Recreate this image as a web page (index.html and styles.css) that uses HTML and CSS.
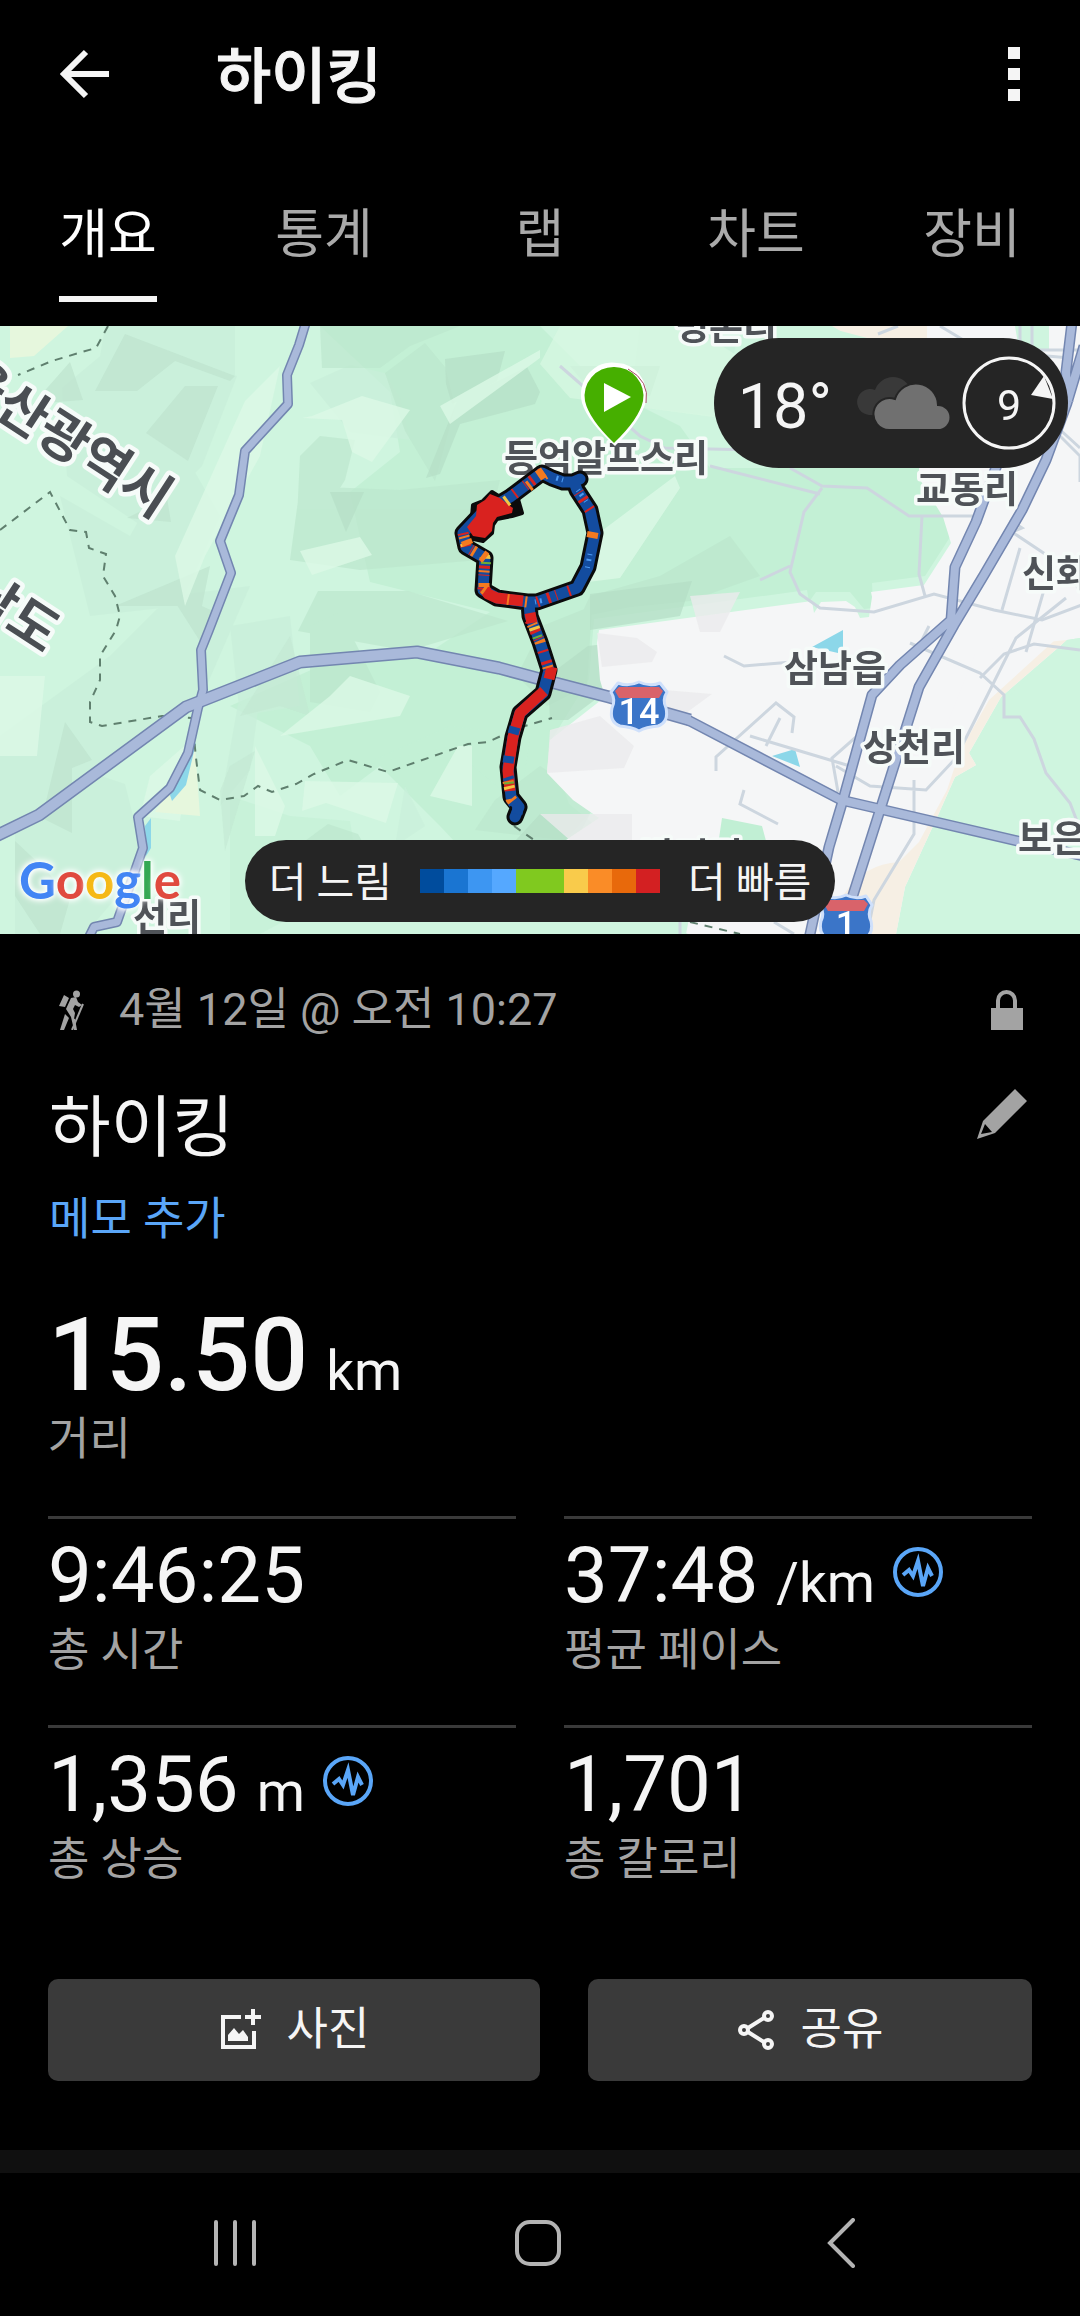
FILE: index.html
```html
<!DOCTYPE html>
<html lang="ko">
<head>
  <meta charset="UTF-8" />
  <meta name="viewport" content="width=device-width, initial-scale=1.0" />
  <title>하이킹</title>
  <link rel="stylesheet" href="styles.css">
</head>
<body>
  <header class="topbar">
    <button class="icon-btn" aria-label="뒤로">
      <svg width="50" height="50" viewBox="0 0 50 50" fill="none" stroke="#f5f5f5" stroke-width="6"><path d="M26 3 4 25l22 22M4 25h45"/></svg>
    </button>
    <h1>하이킹</h1>
    <button class="icon-btn" aria-label="더보기">
      <svg width="12" height="56" viewBox="0 0 12 56" fill="#f5f5f5"><path d="M0 1h12v12H0zM0 22h12v12H0zM0 43h12v12H0z"/></svg>
    </button>
  </header>

  <nav class="tabs">
    <button class="tab active"><span>개요</span></button>
    <button class="tab"><span>통계</span></button>
    <button class="tab"><span>랩</span></button>
    <button class="tab"><span>차트</span></button>
    <button class="tab"><span>장비</span></button>
  </nav>

  <section class="map">
    <svg class="map-canvas" viewBox="0 0 1080 608">
      <rect width="1080" height="608" fill="#cff5df"/>

      <!-- relief -->
      <g fill="#c3f0d5">
        <path d="M320 0h220l60 60 80 40 30 42h210l24 40 8 26-27 42-53 7 1 25-9 1-14-17-34 0-7 10-2-12-213 29-5 60-40 65 20 60 27 22-25 32H470L440 500l-60-60-40 30-30-50-80-40 90-40 110-14 60-40-120-30-20-90 50-40-10-60z"/>
        <path d="M230 470l60 20 60 5 10 60-100 53h-30zM360 440l90-40 80 10-10 70-70-60-90 20z" opacity=".6"/>
      </g>
      <g fill="#c9efda" opacity=".7">
        <path d="M105 0h130v52L150 70l-56-2zM62 62l60-50 115 38-35 90-60 60-75-50zM0 410l110-80 60-60 80-10-50 115L70 470l-70 30zM15 508l50-70 60 20 20 80-60 70H15z"/>
        <path d="M60 170l70 40 50-90 40 70-40 90-90 10zM230 300l60-10 10 90-60 10zM310 57l40-18 35 8 15 25 10 42-60-8z"/>
        <path d="M220 480l30-36 8-60-20-6zM395 520l10-60 20 40zM640 0h100l-20 90-90-10z"/>
      </g>
      <g fill="#bce7cd" opacity=".7">
        <path d="M320 0h140l-50 20-30 22-58 0zM385 47l40-30 20 24 10 40-20 74-30-50zM300 130l20-20 35 4-10 40-50 80zM300 160l100 4 100-10-20 80-120 10-70-10zM318 265l90 0 100 30-100 30-110-20z"/>
        <path d="M590 270l70-20 70-40 30 40-70 25-60 6-50 10zM542 300l50-20-5 80-40 20-30-30zM540 440l30 20 25 22-30 32-90-10 20-30zM298 520l30-22 30 10 20 35-40 25-60 10z"/>
        <path d="M310 300l30-14 40 80-10 20-60-10z"/>
      </g>
      <g fill="#b5dec6" opacity=".7">
        <path d="M445 33l60-8-8 30-45 23-6-20zM457 75l70-34 13 25-5 12-75 20-20 50-14 4zM330 166l34 0-18 40zM570 40h90l-10 30-60-6zM590 268l102-13-12 35-90 14z"/>
        <path d="M548 350l40-30 50-6-30 50-40 30-18 0zM540 488h50l-14 26h-60z"/>
      </g>
      <g fill="#bfe4cf" opacity=".75">
        <path d="M125 8l110 42-5 5-55-20-38 30H95zM185 60h33l-30 75-42-28zM70 36l13 38-50 4zM65 396l27 38-20 8 0 65-30-15zM115 280l95-40-8 40-80 0zM168 265l45 20-10 35zM127 192l40-20 4 24zM15 515l30 28 25 30-10 35H40L15 570z"/>
        <path d="M290 310l20 80-30-10-40 10zM230 440l25-15-30 100-5-60z" opacity=".6"/>
      </g>
      <g fill="#dcf9e6" opacity=".8">
        <path d="M245 75l35-35-20 90-55 100-20 50-10-50zM312 90l50-20 48 14-38 52-20-10-10-32-40-2zM300 225l60-14 12 18-60 20zM255 420l30 60-10 30-20 0z"/>
        <path d="M305 455l93 2-12 40-60-20-24 8zM0 350h45l-8 80H0zM595 210l80-60 5 12-60 90-40 5zM440 80l100-56v8l-90 66zM330 370l20-20 60 20-10 20-120 20zM150 450l40-35-10 80-40-5zM430 470l28-50 14 0 0 60z"/>
      </g>
      <path fill="#e6f7dd" d="M10 0h58L34 30 10 32zM175 455l20-35 5 70-45-4z"/>
      <path fill="#d8f8e3" d="M560 0h130l80 50-50 42-150-20-30-34z" opacity=".7"/>

      <!-- town area -->
      <path fill="#f5f6f7" d="M822 0H1080V312l-13 2-66 57-32 56 7 12-21 12-16 36-34 74-9 47H688l-114-50-14-40 39-26-26-18-26-27 3-33 55-43-5-17-3-37 2-13 213-29 2 12 7-11 25-1 9 6 5 11 9-1 3-20-1-5 53-7 27-42-8-26-24-39V0z"/>
      <path fill="#f6efe4" d="M822 0h105v20l-60-8zM1067 314l-66 57-32 56 7 12-21 12-16 36-34 74-9 47h-56l4-40q20-30 55-32l20-20 28-52 20-60 30-50 50-38z"/>
      <path fill="#f5f6f7" d="M1055 314l-66 60-34 60-6 14-30 60-34 20 50-100 40-100 60-20z"/>
      <path fill="#cff5df" d="M1080 312l-13 2-62 60-34 53 7 12-21 12-14 36-35 74-10 47h182zM580 608l-60-20h170l-4 20zM777 0h55l20 12h-60zM1015 0h34v24h-30z"/>
      <path fill="#c1efd4" d="M722 492l40 8 7 26-52 0z"/>
      <path fill="#ebebec" opacity=".8" d="M597 307l40 5 20 14-5 10-50 5zM550 404l50-14 34 30-10 22-77 5zM690 270l50-4-20 40-20 0zM540 488h92v28h-60zM640 362l72 6-30 22z"/>
      <path fill="#8cd7e9" d="M812 321l31-17v18l-5 5zM772 430l23-7 5 18zM190 421l6-4-10 42-14 16-2-6 12-22zM145 500l6-8v30l-5 8z"/>

      <!-- local streets -->
      <g fill="none" stroke="#cdd6df" stroke-width="3">
        <path d="M560 40l80 70 25 12 90 2M710 140l110 28M790 142l32 18 45 2 42 28 67 0M822 162l-18 24-14 60 10 22 20 14 54 4 60-18 60 16 48 10 42-16M922 190l-3 58 6 22M760 254l30-14M1010 194l12 8-10 4 36 24 26 24 6 12M1020 222l-18 62M1048 250l-22 76"/>
        <path d="M724 330l20 10 48-4M716 445l0-14 60-54 18 14-2 16M750 410l100 30M780 392l-14 28M744 464l-4 14 38 20M838 466l-6-34 32-28M836 440l34 20 56 4 30-32 20-40 40-80 50-40M910 317l70 30 24 22 0 22 16 0 14 22 12 34 24 30 10 26M914 454v54l-40 66-6 30M980 352l24-24 30-10 46 6M929 300l-14 28M680 594l0 14M774 596l20 12"/>
        <path d="M878 8l20-8M940 0l40 24 90 8M1020 0v40M1032 0v24h48M1056 100l24 22M1060 110l20 20v26"/>
      </g>

      <!-- borders -->
      <g fill="none" stroke="#5f7f6e" stroke-width="2" stroke-dasharray="8 7">
        <path d="M108 0l-12 22-14 4-30 9-34 14M0 204l50-38 20 38 16 2 3 16 17 6-3 22 12 20 5 20-4 14-16 26v24l-10 22v20l12 4 60-10 30 2 4 40 4 32 20 10 24-4 14-10 14 6 24-8 18-10 34-14 40 12 80-28 20-2 30-14 34-10M514 500l20 14M690 596l50 12"/>
      </g>

      <!-- main roads -->
      <g fill="none" stroke-linejoin="round" stroke="#7386b0">
        <path stroke-width="10" d="M306-4 299 19 287 49l1 29-43 47-6 44-19 46 11 32-22 57-8 20 2 40-5 18-10 45-18 35-32 29 5 31-26 74-23 5-8 16"/>
        <path stroke-width="13" d="M-4 510 39 489 186 381l76-30 38-15 117-10 82 16 56 15 54 14 81 23"/>
        <path stroke-width="11" d="M686 393l155 81 181 42 62 14"/>
        <path stroke-width="11" d="M1084 20 1067 77l-21 57-24 50-38 65-30 50-35 62-38 120-28 88-10 45M1072-4l-6 50 2 30M998 136l-22 60-21 45-4 53-51 45-28 30-29 105-14 47-20 92"/>
      </g>
      <g fill="none" stroke-linejoin="round" stroke="#a9b9da">
        <path stroke-width="7" d="M306-4 299 19 287 49l1 29-43 47-6 44-19 46 11 32-22 57-8 20 2 40-5 18-10 45-18 35-32 29 5 31-26 74-23 5-8 16"/>
        <path stroke-width="10" d="M-4 510 39 489 186 381l76-30 38-15 117-10 82 16 56 15 54 14 81 23"/>
        <path stroke-width="8" d="M686 393l155 81 181 42 62 14"/>
        <path stroke-width="8" d="M1084 20 1067 77l-21 57-24 50-38 65-30 50-35 62-38 120-28 88-10 45M1072-4l-6 50 2 30M998 136l-22 60-21 45-4 53-51 45-28 30-29 105-14 47-20 92"/>
      </g>

      <!-- highway shields -->
      <g stroke="#cfe0fb" stroke-width="3" stroke-linejoin="round" fill="#3b75c8">
        <path d="M618 357q10 4 21-1 11 5 21 1l7 9q-5 8-1 16 3 14-8 18-12 1-19 5-7-4-19-5-11-4-8-18 4-8-1-16z"/>
        <path d="M826 570q10 4 20-1 10 5 20 1l6 9q-5 8-1 16 3 14-8 18h-34q-11-4-8-18 4-8-1-16z"/>
      </g>
      <path fill="#d9636a" d="M619 361h40l4 4-4 7h-40l-4-7zM828 574h36l4 4-4 7h-36l-4-7z"/>
      <g class="shield-text">
        <text x="639" y="398">14</text>
        <text x="846" y="611">1</text>
      </g>

      <!-- place names -->
      <g class="place">
        <text x="726" y="14">명촌리</text>
        <text x="606" y="146">등억알프스리</text>
        <text x="967" y="177">교동리</text>
        <text x="1073" y="261">신화리</text>
        <text x="835" y="356">삼남읍</text>
        <text x="914" y="435">상천리</text>
        <text x="1069" y="526">보은리</text>
        <text x="692" y="544">방기리</text>
        <text x="167" y="605">선리</text>
      </g>
      <g class="region">
        <text transform="translate(54 127) rotate(33)">울산광역시</text>
        <text transform="translate(-38 275) rotate(33)">경상남도</text>
      </g>

      <!-- recorded track -->
      <g fill="none" stroke-linejoin="round" stroke-linecap="round">
        <path stroke="#0b0b0b" stroke-width="17" d="M580 153l-7 3-10 0-11-4-10-5-32 24-30 18-17 18 3 14 19 11-2 32 14 8 30 4h10l40-14 11-21 7-34-5-23-13-20-3-8M529 276l1 14 10 26 9 28-6 23-23 20-7 24-5 30 3 30 8 10-4 10"/>
        <path fill="#0b0b0b" stroke="#0b0b0b" stroke-width="4" d="M492 166l8 5 10 7 8-5 4 14-10 3-15 3-4 6-1 8-9 8-14-3-6-10 9-11 1-12 10-4z"/>
        <path stroke="#134c9f" stroke-width="11" d="M580 153l-7 3-10 0-11-4-10-5-32 24-30 18-17 18 3 14 19 11-2 32 14 8 30 4h10l40-14 11-21 7-34-5-23-13-20-3-8M529 276l1 14 10 26 9 28-6 23-23 20-7 24-5 30 3 30 8 10-4 10"/>
        <path fill="#d9221f" d="M490 168l10 4 10 8 3 2-1 5-15 4-4 6-1 8-7 7-12-2-6-9 9-11 1-11 8-5z"/>
      </g>
      <g fill="none" stroke-linejoin="round">
        <path stroke="#d9221f" stroke-width="11" d="M484 262l4 6 9 4 26 3M552 341l-3 12M544 365l-24 22-7 24-5 34 2 20M530 287l2 10"/>
        <path stroke="#d9221f" stroke-width="11" stroke-dasharray="2 9 3 6 1 12" d="M542 147l-32 24M463 207l3 14 19 11-2 32M530 294l10 22 9 28M537 276l40-14M590 184l-13-20"/>
        <path stroke="#134c9f" stroke-width="11" d="M515 401l-2 7M509 430l-1 7M508 451l1 3M511 473l3 5M518 480l-1 8"/>
        <path stroke="#f47a20" stroke-width="11" stroke-dasharray="2 16 3 24" d="M545 148l-32 24M464 210l3 11 18 11-2 30 14 10 30 4M532 298l8 18 8 26M508 455l3 18 8 10"/>
        <path stroke="#f5c542" stroke-width="11" stroke-dasharray="3 22 2 30" d="M465 216l3 6 17 10-2 26M534 301l7 20M509 460l3 12M508 174l-4 3"/>
        <path stroke="#6fae33" stroke-width="10" stroke-dasharray="2 28" d="M486 236l-2 30M537 310l8 22M509 456l2 18"/>
        <path stroke="#4d9cf5" stroke-width="5" stroke-dasharray="1 4 2 6" d="M590 228l-3 16M578 164l10 14M563 154l-10-3M535 276l10-2"/>
        <path stroke="#f47a20" stroke-width="11" d="M544 146l-6 4M592 212l1-6M482 229l4 3M466 214l2 5M484 257l0 4"/>
      </g>

      <!-- start marker -->
      <path fill="#fff" d="M617 37a30 32 0 0 1 29 38q-5 20-31 45-27-24-33-43a31 32 0 0 1 35-40z"/>
      <path fill="none" stroke="#a64a63" d="M628 43q22 12 18 34"/>
      <path fill="#46af00" d="M614 41a29 29 0 0 1 29 34q-4 18-29 42-25-24-29-42a29 29 0 0 1 29-34z"/>
      <path fill="#fff" d="M604 57v29l27-15z"/>
    </svg>

    <span class="google"><span class="g-blue">G</span><span class="g-red">o</span><span class="g-yellow">o</span><span class="g-blue">g</span><span class="g-green">l</span><span class="g-red">e</span></span>

    <div class="weather">
      <span class="temp">18°</span>
      <svg width="94" height="54" viewBox="0 0 94 54">
        <path fill="#393939" d="M13 39a13 13 0 1 1 6-25 19 19 0 0 1 36 0L40 40z"/>
        <path fill="#707070" stroke="#252525" stroke-width="2" d="M33 54a16 16 0 1 1 6-31 22 22 0 0 1 43 6 12 12 0 0 1 0 25z"/>
      </svg>
      <span class="wind">
        <svg width="94" height="94" viewBox="0 0 94 94">
          <circle cx="47" cy="47" r="45" fill="none" stroke="#f5f5f5" stroke-width="3"/>
          <path fill="#f5f5f5" d="M69 39l13-19 9 23z"/>
        </svg>
        <span>9</span>
      </span>
    </div>

    <div class="legend">
      <span>더 느림</span>
      <span class="scale"><i class="c1"></i><i class="c2"></i><i class="c3"></i><i class="c4"></i><i class="c5"></i><i class="c5"></i><i class="c6"></i><i class="c7"></i><i class="c8"></i><i class="c9"></i></span>
      <span>더 빠름</span>
    </div>
  </section>

  <main class="details">
    <div class="meta">
      <svg width="26" height="40" viewBox="0 0 26 40" fill="#a3a3a3">
        <circle cx="17.5" cy="4" r="3.5"/>
        <path d="M5 5l5 3-4 9-6-1zM12 8l5-1 2 5 4 3-3 2-4-2-2 4 2 4-1 6-3-2-5-8zM6 24l4 4-5 12H1zM12 27l4 2 2 11h-3z"/>
        <path d="M24 14L13 40" stroke="#a3a3a3" stroke-width="2"/>
      </svg>
      <span>4월 12일 @ 오전 10:27</span>
      <svg width="32" height="40" viewBox="0 0 32 40" fill="#a3a3a3">
        <path d="M0 18h32v22H0z"/>
        <path d="M7 19v-8.500a8.500 8.500 0 0 1 17 0V19" fill="none" stroke="#a3a3a3" stroke-width="4"/>
      </svg>
    </div>

    <div class="title-row">
      <h2>하이킹</h2>
      <button class="icon-btn edit" aria-label="수정">
        <svg width="52" height="52" viewBox="0 0 52 52" fill="#a3a3a3">
          <path fill-rule="evenodd" d="M39 1l12 12-32 32-18 6 6-18zM9 36l-4 10 11-2z"/>
        </svg>
      </button>
    </div>
    <a class="memo" href="#">메모 추가</a>

    <div class="distance">
      <p class="value">15.50 <small>km</small></p>
      <p class="label">거리</p>
    </div>

    <div class="stats">
      <div class="stat">
        <p class="value">9:46:25</p>
        <p class="label">총 시간</p>
      </div>
      <div class="stat">
        <p class="value">37:48 <small>/km</small>
          <svg class="pulse" width="50" height="50" viewBox="0 0 50 50"><circle cx="25" cy="25" r="23"/><path d="M10 28l6-5 4 6 5-15 5 25 5-18 4 8"/></svg>
        </p>
        <p class="label">평균 페이스</p>
      </div>
      <div class="stat">
        <p class="value">1,356 <small>m</small>
          <svg class="pulse" width="50" height="50" viewBox="0 0 50 50"><circle cx="25" cy="25" r="23"/><path d="M10 28l6-5 4 6 5-15 5 25 5-18 4 8"/></svg>
        </p>
        <p class="label">총 상승</p>
      </div>
      <div class="stat">
        <p class="value">1,701</p>
        <p class="label">총 칼로리</p>
      </div>
    </div>

    <div class="actions">
      <button class="action photo">
        <svg width="42" height="42" viewBox="0 0 42 42" fill="none" stroke="#f5f5f5" stroke-width="4">
          <path d="M22 8H4v30h31V22"/>
          <path d="M34 0v16M26 8h16"/>
          <path d="M9 32v-6l6-7 5 6 4-4 5 7v4z" fill="#f5f5f5" stroke="none"/>
        </svg>
        사진
      </button>
      <button class="action share">
        <svg width="38" height="42" viewBox="0 0 38 42" fill="none" stroke="#f5f5f5" stroke-width="4">
          <circle cx="31" cy="7" r="4"/><circle cx="7" cy="21" r="4"/><circle cx="31" cy="35" r="4"/>
          <path d="M11 19l16-10M11 23l16 10"/>
        </svg>
        공유
      </button>
    </div>
  </main>

  <footer class="navbar">
    <button class="icon-btn" aria-label="최근 앱">
      <svg width="44" height="48" viewBox="0 0 44 48" stroke="#b4b4b4" stroke-width="4" stroke-linecap="round"><path d="M3 3v42M22 3v42M41 3v42"/></svg>
    </button>
    <button class="icon-btn" aria-label="홈">
      <svg width="48" height="48" viewBox="0 0 48 48" fill="none" stroke="#b4b4b4" stroke-width="4"><rect x="3" y="3" width="42" height="42" rx="13"/></svg>
    </button>
    <button class="icon-btn" aria-label="이전">
      <svg width="28" height="50" viewBox="0 0 28 50" fill="none" stroke="#b4b4b4" stroke-width="4" stroke-linecap="round"><path d="M26 2 3 25l23 23"/></svg>
    </button>
  </footer>
</body>
</html>
```

FILE: styles.css
```css
* {
  margin: 0;
  padding: 0;
  box-sizing: border-box;
}

body {
  background-color: #000;
  color: #f5f5f5;
  font-family: Roboto, "Noto Sans CJK KR", sans-serif;
  font-size: 45px;
  line-height: 60px;
  overflow-x: hidden;
}

button {
  background: none;
  border: none;
  color: inherit;
  font: inherit;
  cursor: pointer;
}

svg {
  display: block;
}

/* top bar */
.topbar {
  display: flex;
  align-items: center;
  height: 148px;
  padding: 0 60px;
}

.topbar h1 {
  flex: 1;
  margin-left: 106px;
  padding-top: 8px;
  font-size: 60px;
  font-weight: 500;
  -webkit-text-stroke: 1px;
}

.tabs {
  display: flex;
  padding-bottom: 24px;
}

.tab {
  flex: 1;
  padding-top: 57px;
  color: #aaa;
  font-size: 53px;
}

.tab span {
  display: inline-block;
  padding-bottom: 31px;
  border-bottom: 6px solid transparent;
}

.tab.active {
  color: #fff;
}

.tab.active span {
  border-color: #f5f5f5;
}

/* map */
.map {
  position: relative;
  overflow: hidden;
}

.map-canvas {
  width: 100%;
  height: auto;
}

.place text {
  font-size: 37px;
  font-weight: 700;
  fill: #4f5358;
  stroke: #f6fbf9;
  stroke-width: 7px;
  stroke-linejoin: round;
  paint-order: stroke;
  text-anchor: middle;
}

.region text {
  font-size: 53px;
  font-weight: 700;
  fill: #4a4e53;
  stroke: #f6fbf9;
  stroke-width: 9px;
  stroke-linejoin: round;
  paint-order: stroke;
  text-anchor: middle;
}

.shield-text text {
  font-size: 36px;
  font-weight: 500;
  fill: #fff;
  text-anchor: middle;
}

.google {
  position: absolute;
  left: 19px;
  bottom: 24px;
  font-family: Lato, sans-serif;
  font-size: 51px;
  font-weight: 700;
  text-shadow: 0 0 4px #fff, 0 0 6px #fff, 0 0 8px #fff;
}

.g-blue { color: #4285f4; }
.g-red { color: #e04a3f; }
.g-yellow { color: #f5b915; }
.g-green { color: #34a853; }

.weather {
  position: absolute;
  top: 12px;
  right: 12px;
  display: flex;
  align-items: center;
  height: 130px;
  padding: 0 12px 0 24px;
  border-radius: 65px;
  background-color: #252525;
}

.temp {
  margin-right: 24px;
  padding-top: 8px;
  font-size: 63px;
}

.wind {
  position: relative;
  margin-left: 12px;
}

.wind span {
  position: absolute;
  inset: 0;
  font-size: 43px;
  line-height: 98px;
  text-align: center;
}

.legend {
  position: absolute;
  right: 0;
  bottom: 12px;
  left: 0;
  display: flex;
  align-items: center;
  justify-content: center;
  gap: 28px;
  width: max-content;
  height: 82px;
  margin: 0 auto;
  padding: 4px 24px 0;
  border-radius: 41px;
  background-color: #252525;
  font-size: 41px;
}

.scale {
  display: flex;
  margin-bottom: 4px;
}

.scale i {
  width: 24px;
  height: 24px;
}

.c1 { background: #004c9d; }
.c2 { background: #1a75d2; }
.c3 { background: #3d96f2; }
.c4 { background: #55a8ff; }
.c5 { background: #80c91f; }
.c6 { background: #f9cb4b; }
.c7 { background: #fa8c27; }
.c8 { background: #e8690b; }
.c9 { background: #d32022; }

/* details */
.details {
  padding: 46px 48px 69px;
  border-bottom: 23px solid #101010;
}

.meta {
  display: flex;
  align-items: center;
  padding: 0 9px 0 11px;
  color: #a3a3a3;
}

.meta span {
  flex: 1;
  margin-left: 34px;
}

.title-row {
  display: flex;
  justify-content: space-between;
  margin-top: 48px;
  padding: 0 4px 0 1px;
}

.title-row h2 {
  font-size: 67px;
  font-weight: 400;
  line-height: 80px;
}

.edit {
  align-self: flex-start;
}

.memo {
  display: block;
  width: max-content;
  margin-top: 22px;
  padding-left: 1px;
  color: #5aa6f8;
  text-decoration: none;
}

.value {
  display: flex;
  align-items: baseline;
  gap: 18px;
  font-size: 78px;
  line-height: 90px;
}

.value small {
  font-size: 55px;
  line-height: 60px;
}

.label {
  color: #a3a3a3;
}

.distance {
  margin-top: 50px;
}

.distance .value {
  font-size: 102px;
  font-weight: 500;
  line-height: 110px;
}

.distance small {
  font-weight: 400;
}

.stats {
  display: grid;
  grid-template-columns: 1fr 1fr;
  gap: 44px 48px;
  margin-top: 46px;
}

.stat {
  padding-top: 12px;
  border-top: 3px solid #3a3a3a;
}

.pulse {
  align-self: center;
  margin-bottom: 8px;
  fill: none;
  stroke: #5aa6f8;
  stroke-width: 4px;
}

.actions {
  display: flex;
  gap: 48px;
  margin-top: 89px;
}

.action {
  display: flex;
  align-items: center;
  justify-content: center;
  gap: 26px;
  height: 102px;
  border-radius: 10px;
  background-color: #3a3a3a;
}

.photo {
  flex: 41;
}

.share {
  flex: 37;
}

/* system navigation */
.navbar {
  display: flex;
  align-items: center;
  height: 140px;
  padding: 0 88px 0 84px;
}

.navbar .icon-btn {
  display: flex;
  flex: 1;
  justify-content: center;
}
```
